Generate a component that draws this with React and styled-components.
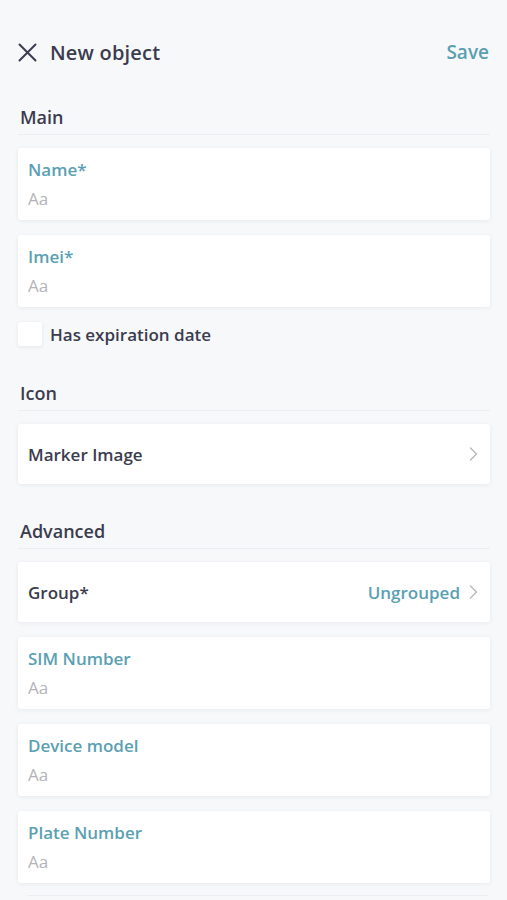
import React, { useState } from 'react'
import styled, { createGlobalStyle } from 'styled-components'

const GlobalStyle = createGlobalStyle`
    body {
        margin: 0;
        background: #f7f8fa;
        font-family: "Open Sans", Lato, sans-serif;
        color: #3b3c4e;
    }
`

const Page = styled.div`
    width: 507px;
    min-height: 900px;
    background: #f7f8fa;
    padding: 0 17px 0 18px;
    box-sizing: border-box;
`

const StatusBar = styled.div`
    height: 24px;
`

const Header = styled.div`
    height: 56px;
    display: flex;
    align-items: center;
    justify-content: space-between;
`

const HeaderLeft = styled.div`
    display: flex;
    align-items: center;
    gap: 13px;
`

const Title = styled.h1`
    margin: 0;
    font-size: 20px;
    font-weight: 600;
    letter-spacing: 0.2px;
    color: #3b3c4e;
`

const SaveButton = styled.button`
    border: none;
    background: none;
    padding: 0;
    font-family: inherit;
    font-size: 19px;
    font-weight: 600;
    color: #5b9fb3;
    margin-right: 1px;
`

const SectionTitle = styled.div`
    margin-top: ${p => p.top}px;
    line-height: 20px;
    font-size: 18px;
    font-weight: 600;
    color: #3b3c4e;
    padding: 0 2px 7px;
    border-bottom: 1px solid #eceef1;
`

const Card = styled.div`
    margin-top: ${p => p.top || 15}px;
    background: #fff;
    border-radius: 3px;
    box-shadow: 0 1px 5px rgba(30, 40, 60, 0.07);
    padding: 0 10px;
`

const FieldCard = styled(Card)`
    padding-top: 12px;
    padding-bottom: 12px;
    display: flex;
    flex-direction: column;
    gap: 8px;
`

const FieldLabel = styled.label`
    line-height: 20px;
    font-size: 17px;
    font-weight: 600;
    color: #5b9fb3;
`

const FieldInput = styled.input`
    border: none;
    outline: none;
    padding: 0;
    height: 20px;
    font-family: inherit;
    font-size: 17px;
    color: #3b3c4e;
    background: transparent;
    &::placeholder {
        color: #b4b4b8;
    }
`

const LinkRow = styled(Card)`
    height: 60px;
    display: flex;
    align-items: center;
    justify-content: space-between;
    padding-right: 12px;
`

const RowLabel = styled.span`
    font-size: 17px;
    font-weight: 600;
    color: #3b3c4e;
`

const RowRight = styled.div`
    display: flex;
    align-items: center;
    gap: 9px;
`

const RowValue = styled.span`
    font-size: 17px;
    font-weight: 600;
    color: #5b9fb3;
`

const CheckRow = styled.label`
    margin-top: 15px;
    height: 24px;
    display: flex;
    align-items: center;
    gap: 8px;
    font-size: 17px;
    font-weight: 600;
    color: #3b3c4e;
`

const CheckBox = styled.span`
    width: 24px;
    height: 24px;
    border-radius: 3px;
    background: ${p => (p.checked ? '#5b9fb3' : '#fff')};
    box-shadow: 0 1px 4px rgba(30, 40, 60, 0.09);
`

const BottomLine = styled.div`
    margin: 12px 2px 0 9px;
    border-top: 1px solid #eceef1;
`

const CloseIcon = () => (
    <svg width="19" height="19" viewBox="0 0 19 19" fill="none">
        <path d="M1.5 1.5L17.5 17.5M17.5 1.5L1.5 17.5" stroke="#3b3c4e" strokeWidth="2" strokeLinecap="round" />
    </svg>
)

const Chevron = () => (
    <svg width="9" height="14" viewBox="0 0 9 14" fill="none">
        <path d="M1.5 1L7.5 7L1.5 13" stroke="#b8b8bc" strokeWidth="1.4" strokeLinecap="round" strokeLinejoin="round" />
    </svg>
)

const Field = ({ label, top }) => (
    <FieldCard top={top}>
        <FieldLabel>{label}</FieldLabel>
        <FieldInput placeholder="Aa" />
    </FieldCard>
)

const App = () => {
    const [expires, setExpires] = useState(false)

    return (
        <Page>
            <GlobalStyle />
            <StatusBar />
            <Header>
                <HeaderLeft>
                    <CloseIcon />
                    <Title>New object</Title>
                </HeaderLeft>
                <SaveButton>Save</SaveButton>
            </Header>

            <SectionTitle top={27}>Main</SectionTitle>
            <Field label="Name*" top={13} />
            <Field label="Imei*" />
            <CheckRow onClick={() => setExpires(!expires)}>
                <CheckBox checked={expires} />
                Has expiration date
            </CheckRow>

            <SectionTitle top={37}>Icon</SectionTitle>
            <LinkRow top={13}>
                <RowLabel>Marker Image</RowLabel>
                <Chevron />
            </LinkRow>

            <SectionTitle top={37}>Advanced</SectionTitle>
            <LinkRow top={13}>
                <RowLabel>Group*</RowLabel>
                <RowRight>
                    <RowValue>Ungrouped</RowValue>
                    <Chevron />
                </RowRight>
            </LinkRow>
            <Field label="SIM Number" />
            <Field label="Device model" />
            <Field label="Plate Number" />
            <BottomLine />
        </Page>
    )
}

export default App
